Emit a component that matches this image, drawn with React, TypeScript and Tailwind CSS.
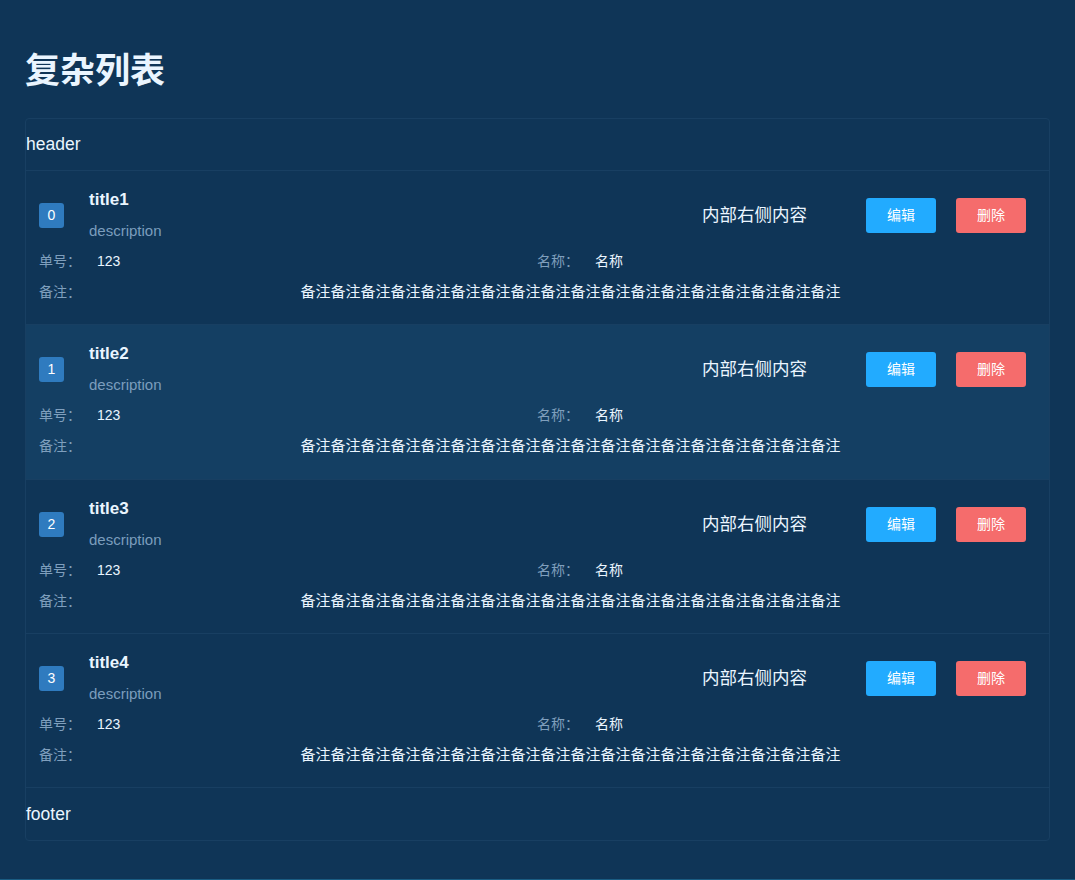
import React from "react";

const items = [
  { title: "title1" },
  { title: "title2", active: true },
  { title: "title3" },
  { title: "title4" },
];

export default function App() {
  return (
    <div
      className="min-h-[880px] h-[880px] bg-[#0f3557] text-[#e8f4ff] border-b border-[#1a5c82] overflow-hidden"
      style={{ fontFamily: '"Liberation Sans", Arial, "Noto Sans CJK SC", sans-serif' }}
    >
      <div className="px-[25px] pt-[53px]">
        <h1 className="text-[35px] leading-[36px] font-bold text-[#eaf5ff]">复杂列表</h1>
        <div className="mt-[29px] border border-[#183f62] rounded-[4px]">
          <div className="h-[51px] flex items-center text-[17.5px] text-[#eaf5ff]">header</div>
          {items.map((it, i) => (
            <div
              key={i}
              className={`border-t border-[#183f62] pl-[13px] pr-[23px] pt-[16px] ${
                it.active ? "bg-[#143f63] pb-[23px]" : "pb-[22px]"
              }`}
            >
              <div className="flex items-center">
                <div className="w-[25px] h-[25px] rounded-[3px] bg-[#2f7bbf] flex items-center justify-center text-[14px] text-white mt-[2px]">
                  {i}
                </div>
                <div className="ml-[25px] flex flex-col">
                  <div className="text-[17px] leading-[24px] font-bold text-[#eaf5ff] mt-[1px]">{it.title}</div>
                  <div className="mt-[9px] text-[15px] leading-[20px] text-[#7b9dbd]">description</div>
                </div>
                <div className="flex-1" />
                <div className="text-[17.5px] text-[#eaf5ff] mr-[59px] mt-[2px]">内部右侧内容</div>
                <div className="flex gap-[20px] mt-[2px]">
                  <button className="w-[70px] h-[35px] rounded-[3px] bg-[#22abff] text-white text-[14px]">编辑</button>
                  <button className="w-[70px] h-[35px] rounded-[3px] bg-[#f56c6c] text-white text-[14px]">删除</button>
                </div>
              </div>
              <div className="mt-[10px] flex h-[20px] items-center text-[14px]">
                <div className="w-[498px] flex">
                  <span className="w-[58px] text-[#7f9fbd]">单号：</span>
                  <span className="text-[#eaf5ff]">123</span>
                </div>
                <div className="flex">
                  <span className="w-[58px] text-[#7f9fbd]">名称：</span>
                  <span className="text-[#eaf5ff]">名称</span>
                </div>
              </div>
              <div className="mt-[11px] flex h-[20px] items-center text-[14px]">
                <span className="w-[76px] text-[#7f9fbd]">备注：</span>
                <span className="flex-1 text-center text-[15px] text-[#eaf5ff]">
                  备注备注备注备注备注备注备注备注备注备注备注备注备注备注备注备注备注备注
                </span>
              </div>
            </div>
          ))}
          <div className="border-t border-[#183f62] h-[53px] flex items-center text-[17.5px] text-[#eaf5ff]">footer</div>
        </div>
      </div>
    </div>
  );
}
